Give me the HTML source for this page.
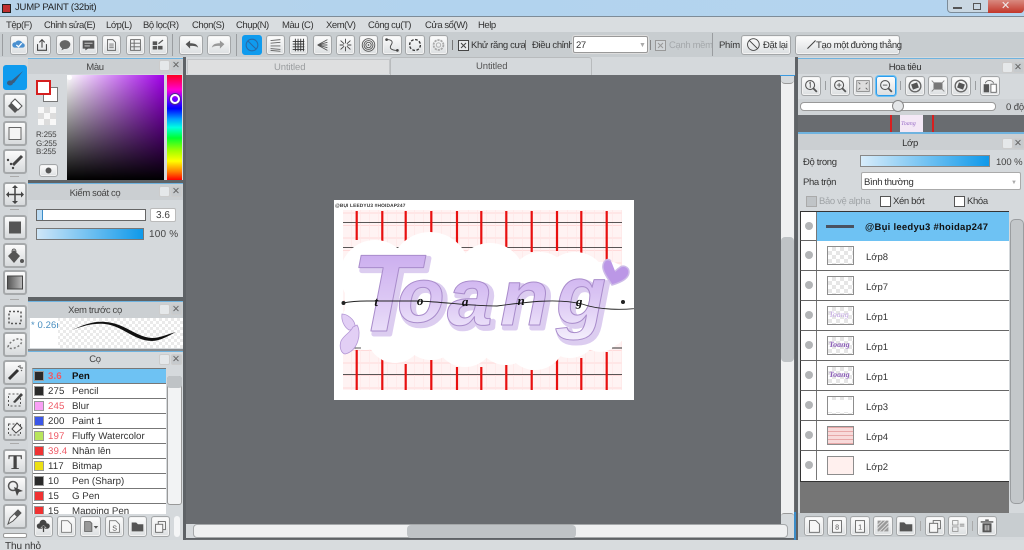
<!DOCTYPE html>
<html lang="vi"><head><meta charset="utf-8"><title>JUMP PAINT</title>
<style>
html,body{margin:0;padding:0}
body{width:1024px;height:550px;overflow:hidden;position:relative;background:#d8dcde;font:9.5px "Liberation Sans","DejaVu Sans",sans-serif;letter-spacing:-.35px;color:#333;text-rendering:geometricPrecision}
div,span,svg{position:absolute;box-sizing:border-box}
.t{white-space:nowrap;line-height:12px;margin-top:1px}
.m{top:19px;font-size:9.5px;letter-spacing:-.45px;color:#333;white-space:nowrap;line-height:14px}
.b{background:linear-gradient(#fdfdfd,#dcdfe1);border:1px solid #a3a6a8;border-radius:3px;box-shadow:inset 0 0 0 1px #f2f2f2}
.b svg{left:0;top:0;width:100%;height:100%}
.lb{left:3px;width:24px;height:25px;border:2px solid #a6a9ab;border-radius:3px;background:linear-gradient(#fbfbfb,#d7dadc)}
.lb svg{left:0;top:0;width:20px;height:21px}
.sep{width:1px;background:#9a9da0}
.ttl{color:#444;text-align:center;line-height:12px;white-space:nowrap;margin-top:2px}
.ic{width:11px;height:11px;background:#e5e8ea;border:1px solid #ccc;border-radius:2px}
.x{font-weight:bold;font-size:9.5px;color:#666;letter-spacing:0;line-height:12px;white-space:nowrap}
.r{left:32px;width:134px;height:15px;background:#fff;border-bottom:1px solid #777}
.sw{left:1px;top:2px;width:10px;height:10px;border:1px solid #999}
.n{left:15px;top:2px;font-size:9.7px;line-height:12px;color:#333;letter-spacing:.1px}
.p{color:#ee5a66}
.nm{left:39px;top:2px;font-size:9.7px;line-height:12px;color:#333;white-space:nowrap;letter-spacing:0}
.lr{left:800px;width:209px;height:30px;background:#fff;border-bottom:1px solid #666}
.eye{left:4px;top:10px;width:8px;height:8px;border-radius:50%;background:#b3b5b7}
.vl{left:15px;top:0;width:1px;height:29px;background:#777}
.th{left:26px;top:5px;width:27px;height:19px;border:1px solid #8d8d8d;background:repeating-conic-gradient(#e6e6e6 0 25%,#fff 0 50%) 0 0/8px 8px}
.ln{left:65px;top:11px;font-size:9.5px;line-height:12px;color:#333;white-space:nowrap;letter-spacing:0}
.cb{width:11px;height:11px;background:#fff;border:1px solid #555}
</style></head><body>

<!-- title bar -->
<div style="left:0;top:0;width:1024px;height:17px;background:linear-gradient(90deg,#b6d3ea,#b2d3ee 45%,#b5d4ef 100%);border-bottom:1px solid #7e8c98"></div>
<div style="left:2px;top:4px;width:9px;height:9px;background:#c03030;border:1px solid #222"></div>
<div class="t" style="left:15px;top:1px;font-size:9.5px;color:#222;letter-spacing:-.2px">JUMP PAINT (32bit)</div>
<div style="left:947px;top:0;width:77px;height:13px;background:#c9d7e2;border:1px solid #7c8b98;border-top:0;border-radius:0 0 4px 4px"></div>
<div style="left:953px;top:7px;width:9px;height:2px;background:#555"></div>
<div style="left:973px;top:3px;width:8px;height:7px;border:1.5px solid #555"></div>
<div style="left:988px;top:0;width:36px;height:13px;background:linear-gradient(#d98a80,#c2362a);border-radius:0 0 4px 0"></div>
<div class="t" style="left:1001px;top:-1px;font-size:11px;font-weight:bold;color:#f0eaea">✕</div>

<!-- menu -->
<div style="left:0;top:17px;width:1024px;height:15px;background:#d9dde0"></div>
<span class="m" style="left:6px">Tệp(F)</span>
<span class="m" style="left:44px">Chỉnh sửa(E)</span>
<span class="m" style="left:106px">Lớp(L)</span>
<span class="m" style="left:143px">Bộ lọc(R)</span>
<span class="m" style="left:192px">Chọn(S)</span>
<span class="m" style="left:236px">Chụp(N)</span>
<span class="m" style="left:282px">Màu (C)</span>
<span class="m" style="left:326px">Xem(V)</span>
<span class="m" style="left:368px">Công cụ(T)</span>
<span class="m" style="left:425px">Cửa sổ(W)</span>
<span class="m" style="left:478px">Help</span>

<!-- toolbar -->
<div style="left:0;top:32px;width:1024px;height:25px;background:#c8cdd0"></div>
<div class="sep" style="left:2px;top:34px;height:22px"></div>
<div class="b" style="left:10px;top:35px;width:18px;height:20px"><svg viewBox="0 0 18 20"><path d="M4 13a3 3 0 0 1 1-6 4.500 4.500 0 0 1 8 1 2.500 2.500 0 0 1 0 5z" fill="#4a90d0"/><path d="M6 10l2.500 2 3.500-4" stroke="#fff" stroke-width="1.400" fill="none"/></svg></div>
<div class="b" style="left:33px;top:35px;width:18px;height:20px"><svg viewBox="0 0 18 20"><path d="M4 9v7h10V9M9 13V4M6 7l3-3 3 3" fill="none" stroke="#444" stroke-width="1.200"/></svg></div>
<div class="b" style="left:56px;top:35px;width:18px;height:20px"><svg viewBox="0 0 18 20"><ellipse cx="9" cy="9.500" rx="6" ry="5" fill="#666"/><path d="M6 13l-1 3 4-2z" fill="#666"/></svg></div>
<div class="b" style="left:79px;top:35px;width:19px;height:20px"><svg viewBox="0 0 19 20"><path d="M3 5h13v9h-7l-3 2v-2H3z" fill="#555"/><path d="M5 8h9M5 11h6" stroke="#ddd"/></svg></div>
<div class="b" style="left:102px;top:35px;width:19px;height:20px"><svg viewBox="0 0 19 20"><path d="M5 4h6l3 3v9H5z" fill="none" stroke="#666"/><path d="M7 9h5M7 11h5M7 13h5" stroke="#777"/></svg></div>
<div class="b" style="left:126px;top:35px;width:19px;height:20px"><svg viewBox="0 0 19 20"><rect x="4" y="4" width="11" height="12" fill="none" stroke="#666"/><path d="M4 8h11M4 12h11M8 4v12" stroke="#666"/></svg></div>
<div class="b" style="left:149px;top:35px;width:19px;height:20px"><svg viewBox="0 0 19 20"><path d="M3 6h5v4H3zM9 11h5v4H9zM3 11h5v4H3z" fill="#555"/><path d="M9 8l5-4 1 1-5 4z" fill="#555"/></svg></div>
<div class="sep" style="left:172px;top:34px;height:22px"></div>
<div class="b" style="left:179px;top:35px;width:24px;height:20px"><svg viewBox="0 0 24 20"><path d="M6 9l5-4v3c5 0 8 1 9 5-2-2-5-2-9-2v3z" fill="#555"/></svg></div>
<div class="b" style="left:207px;top:35px;width:24px;height:20px"><svg viewBox="0 0 24 20"><path d="M18 9l-5-4v3c-5 0-8 1-9 5 2-2 5-2 9-2v3z" fill="#999"/></svg></div>
<div class="sep" style="left:236px;top:34px;height:22px"></div>
<div class="b" style="left:242px;top:35px;width:20px;height:20px;background:#0f9bee;border-color:#0f9bee;box-shadow:none"><svg viewBox="0 0 20 20"><circle cx="10" cy="10" r="6.500" fill="none" stroke="#286aa8" stroke-width="1.200"/><path d="M5.500 5.500l9 9" stroke="#286aa8" stroke-width="1.200"/></svg></div>
<div class="b" style="left:266px;top:35px;width:19px;height:20px"><svg viewBox="0 0 19 20"><path d="M4 5l11-1M4 8l11-1M4 11l11 0M4 14l11 1M4 16l11 1" stroke="#666" fill="none"/></svg></div>
<div class="b" style="left:289px;top:35px;width:19px;height:20px"><svg viewBox="0 0 19 20"><path d="M3 6h13M3 9h13M3 12h13M3 15h13M6 3v14M9 3v14M12 3v14M15 3v14" stroke="#333" fill="none"/></svg></div>
<div class="b" style="left:313px;top:35px;width:19px;height:20px"><svg viewBox="0 0 19 20"><path d="M4 10l11-6M4 10h11M4 10l11 6M4 10l11-3M4 10l11 3" stroke="#555" fill="none"/></svg></div>
<div class="b" style="left:336px;top:35px;width:19px;height:20px"><svg viewBox="0 0 19 20"><path d="M9.500 3v14M3 10h13M4 5l11 10M15 5L4 15" stroke="#444" fill="none"/><circle cx="9.500" cy="10" r="2" fill="#f2f2f2"/></svg></div>
<div class="b" style="left:359px;top:35px;width:19px;height:20px"><svg viewBox="0 0 19 20"><circle cx="9.500" cy="10" r="7" fill="none" stroke="#555"/><circle cx="9.500" cy="10" r="5" fill="none" stroke="#555"/><circle cx="9.500" cy="10" r="3" fill="none" stroke="#555"/><circle cx="9.500" cy="10" r="1" fill="#555"/></svg></div>
<div class="b" style="left:382px;top:35px;width:20px;height:20px"><svg viewBox="0 0 20 20"><path d="M4 4c7 0 7 3 5 6s-1 6 7 6" fill="none" stroke="#444"/><circle cx="4" cy="4" r="1.500" fill="#444"/><circle cx="16" cy="16" r="1.500" fill="#444"/></svg></div>
<div class="b" style="left:405px;top:35px;width:20px;height:20px"><svg viewBox="0 0 20 20"><circle cx="10" cy="10" r="6" fill="none" stroke="#333" stroke-width="1.500" stroke-dasharray="3 1.700"/></svg></div>
<div class="b" style="left:429px;top:35px;width:19px;height:20px"><svg viewBox="0 0 19 20"><circle cx="9.500" cy="10" r="5.500" fill="none" stroke="#aaa" stroke-width="2" stroke-dasharray="2.500 1"/><circle cx="9.500" cy="10" r="2.500" fill="none" stroke="#aaa"/></svg></div>
<div class="sep" style="left:452px;top:40px;height:10px;background:#777"></div>
<div class="cb" style="left:458px;top:40px;background:#e8eaec;border-color:#444"><svg viewBox="0 0 9 9" style="left:0;top:0;width:9px;height:9px"><path d="M2 2l5 5M7 2l-5 5" stroke="#444"/></svg></div>
<div class="t" style="left:471px;top:39px">Khử răng cưa</div>
<div class="sep" style="left:525px;top:40px;height:10px;background:#777"></div>
<div class="t" style="left:532px;top:39px">Điều chỉnh</div>
<div style="left:573px;top:36px;width:75px;height:17px;background:#fff;border:1px solid #999;border-radius:2px;box-shadow:0 0 0 1px #ddd"></div>
<div class="t" style="left:576px;top:39px">27</div>
<div class="t" style="left:639px;top:39px;font-size:7px;color:#aaa">▼</div>
<div class="sep" style="left:650px;top:40px;height:10px;background:#888"></div>
<div class="cb" style="left:655px;top:40px;background:#d2d6d9;border-color:#999"><svg viewBox="0 0 9 9" style="left:0;top:0;width:9px;height:9px"><path d="M2 2l5 5M7 2l-5 5" stroke="#999"/></svg></div>
<div class="t" style="left:669px;top:39px;color:#a4a8ab">Cạnh mềm</div>
<div class="sep" style="left:712px;top:33px;height:23px"></div>
<div class="t" style="left:719px;top:39px">Phím</div>
<div class="b" style="left:741px;top:35px;width:50px;height:20px"><svg viewBox="0 0 50 20"><circle cx="11" cy="9.500" r="6.500" fill="none" stroke="#444"/><path d="M6.500 5l9 9" stroke="#444"/></svg></div>
<div class="t" style="left:763px;top:39px">Đặt lại</div>
<div class="b" style="left:795px;top:35px;width:105px;height:20px"><svg viewBox="0 0 105 20"><path d="M8 14l9-9" stroke="#444" stroke-width="1.200"/></svg></div>
<div class="t" style="left:816px;top:39px">Tạo một đường thẳng</div>

<!-- left tool column -->
<div style="left:0;top:57px;width:28px;height:483px;background:#d2d6d9"></div>
<div class="lb" style="top:65px;background:#0f9bee;border-color:#0f9bee"><svg viewBox="0 0 20 21"><path d="M3 17l3-3 12-10-9 12z" fill="#3a5d80"/><ellipse cx="5" cy="16" rx="3" ry="2.500" fill="#3a5d80"/></svg></div>
<div class="lb" style="top:93px"><svg viewBox="0 0 20 21"><path d="M3 11l7-7 7 7-7 7z" fill="#555"/><path d="M6 8l4-4 7 7-4 4z" fill="#fff" stroke="#555"/></svg></div>
<div class="lb" style="top:121px"><svg viewBox="0 0 20 21"><rect x="4" y="4.500" width="12" height="12" fill="#f4f4f4" stroke="#666"/></svg></div>
<div class="lb" style="top:149px"><svg viewBox="0 0 20 21"><path d="M8 14l9-9" stroke="#444" stroke-width="3"/><circle cx="3" cy="9" r="1.200" fill="#444"/><circle cx="6" cy="13" r="1.200" fill="#444"/><circle cx="8" cy="17" r="1.200" fill="#444"/></svg></div>
<div style="left:10px;top:176px;width:9px;height:1px;background:#aaa"></div>
<div class="lb" style="top:182px"><svg viewBox="0 0 20 21"><path d="M10 3v15M2.500 10.500h15" stroke="#444" stroke-width="1.500"/><path d="M10 1l3 3H7zM10 20l3-3H7zM1 10.500l3-3v6zM19 10.500l-3-3v6z" fill="#444"/></svg></div>
<div style="left:10px;top:209px;width:9px;height:1px;background:#aaa"></div>
<div class="lb" style="top:215px"><svg viewBox="0 0 20 21"><rect x="4" y="4.500" width="12" height="12" fill="#555"/></svg></div>
<div class="lb" style="top:243px"><svg viewBox="0 0 20 21"><path d="M3 11l6-6 6 6-6 7z" fill="#555"/><path d="M7 7c0-4 4-4 4 0" fill="none" stroke="#555"/><circle cx="17" cy="16" r="2" fill="#555"/></svg></div>
<div class="lb" style="top:270px"><svg viewBox="0 0 20 21"><defs><linearGradient id="g1"><stop offset="0" stop-color="#555"/><stop offset="1" stop-color="#bbb"/></linearGradient></defs><rect x="2.500" y="4" width="15" height="13" fill="url(#g1)" stroke="#444"/></svg></div>
<div style="left:10px;top:299px;width:9px;height:1px;background:#aaa"></div>
<div class="lb" style="top:305px"><svg viewBox="0 0 20 21"><rect x="4" y="4.500" width="12" height="12" fill="none" stroke="#555" stroke-width="1.500" stroke-dasharray="2 2"/></svg></div>
<div class="lb" style="top:332px"><svg viewBox="0 0 20 21"><path d="M3 13c1-5 8-9 12-8s1 6-3 8-8 2-9 0z" fill="none" stroke="#777" stroke-width="1.500" stroke-dasharray="2 2"/></svg></div>
<div class="lb" style="top:360px"><svg viewBox="0 0 20 21"><path d="M4 17L13 8" stroke="#333" stroke-width="3"/><path d="M15 3v3M18 6h-3M13 4l1 1M17 9l-1-1" stroke="#555"/></svg></div>
<div class="lb" style="top:387px"><svg viewBox="0 0 20 21"><rect x="3.500" y="5" width="12" height="12" fill="none" stroke="#555" stroke-dasharray="2 2"/><path d="M8 13l8-9 2 2-8 8z" fill="#444"/></svg></div>
<div class="lb" style="top:416px"><svg viewBox="0 0 20 21"><rect x="3.500" y="6" width="12" height="11" fill="none" stroke="#555" stroke-dasharray="2 2"/><path d="M7 11l5-6 5 5-6 5z" fill="#f4f4f4" stroke="#444"/></svg></div>
<div style="left:10px;top:443px;width:9px;height:1px;background:#aaa"></div>
<div class="lb" style="top:449px"><svg viewBox="0 0 20 21"><text x="10" y="18" text-anchor="middle" font-family="Liberation Serif" font-weight="bold" font-size="21" fill="#444">T</text></svg></div>
<div class="lb" style="top:476px"><svg viewBox="0 0 20 21"><circle cx="8" cy="8" r="4.500" fill="none" stroke="#555" stroke-width="1.500"/><path d="M9 9l9 4-4 1-2 4z" fill="#444"/></svg></div>
<div class="lb" style="top:504px"><svg viewBox="0 0 20 21"><path d="M3 18l2-6 8-8 3 3-8 8z" fill="#f4f4f4" stroke="#555"/><path d="M9 8l4-4 3 3-4 4z" fill="#555"/></svg></div>
<div style="left:3px;top:533px;width:24px;height:5px;background:#fff;border:1px solid #999;border-radius:2px"></div>

<!-- left panels -->
<div style="left:28px;top:57px;width:155px;height:483px;background:#d5d9dc"></div>
<div style="left:28px;top:58px;width:155px;height:1px;background:#6fb3df"></div>
<div style="left:28px;top:59px;width:155px;height:15px;background:#cbcfd2"></div>
<div class="ttl" style="left:70px;top:60px;width:50px">Màu</div>
<div class="ic" style="left:159px;top:60px"></div><div class="ic" style="left:171px;top:60px;background:#c6cacd"></div>
<div class="x" style="left:172px;top:60px">✕</div>
<div style="left:43px;top:87px;width:15px;height:15px;background:#fff;border:1px solid #777"></div>
<div style="left:36px;top:80px;width:15px;height:15px;background:#fff;border:2px solid #d51f1f"></div>
<div style="left:38px;top:107px;width:18px;height:18px;background:repeating-conic-gradient(#dcdcdc 0 25%,#f8f8f8 0 50%) 0 0/12px 12px"></div>
<div class="t" style="left:36px;top:130px;font-size:8px;line-height:8.5px;letter-spacing:-.2px;color:#444">R:255<br>G:255<br>B:255</div>
<div class="b" style="left:39px;top:164px;width:19px;height:13px"><svg viewBox="0 0 19 13"><circle cx="9.500" cy="6.500" r="3.500" fill="#555"/></svg></div>
<div style="left:67px;top:75px;width:97px;height:105px;background:linear-gradient(transparent,#000),linear-gradient(90deg,#fff,#a000e8)"></div>
<div style="left:67px;top:75px;width:5px;height:5px;background:#fff;border-radius:50%"></div>
<div style="left:167px;top:75px;width:15px;height:105px;background:linear-gradient(#ff0020,#ff00d0 14%,#8000ff 22%,#0000ff 32%,#00a0ff 42%,#00ffe0 50%,#00ff30 60%,#a0ff00 72%,#ffff00 82%,#ff8000 92%,#ff0000)"></div>
<div style="left:170px;top:94px;width:10px;height:10px;border-radius:50%;border:2px solid #fff;box-shadow:0 0 0 1px #4b2a90;background:transparent"></div>

<!-- brush control -->
<div style="left:28px;top:180px;width:155px;height:3px;background:#5f6366"></div>
<div style="left:28px;top:183px;width:155px;height:1px;background:#6fb3df"></div>
<div style="left:28px;top:184px;width:155px;height:16px;background:#cbcfd2"></div>
<div class="ttl" style="left:65px;top:186px;width:60px">Kiểm soát cọ</div>
<div class="ic" style="left:159px;top:186px"></div><div class="ic" style="left:171px;top:186px;background:#c6cacd"></div>
<div class="x" style="left:172px;top:186px">✕</div>
<div style="left:36px;top:209px;width:110px;height:12px;background:linear-gradient(90deg,#bcdcf4 6px,#fff 6px);border:1px solid #666"></div>
<div style="left:42px;top:210px;width:1px;height:10px;background:#3b8cc8"></div>
<div style="left:150px;top:208px;width:26px;height:14px;background:#fff;border:1px solid #bbb;border-radius:2px;font-size:10px;letter-spacing:0;text-align:center;line-height:13px;color:#444">3.6</div>
<div style="left:36px;top:228px;width:108px;height:12px;background:linear-gradient(90deg,#cfe6f7,#0f99ea);border:1px solid #777"></div>
<div class="t" style="left:149px;top:228px;color:#444;font-size:10px;letter-spacing:.2px">100 %</div>

<!-- brush preview -->
<div style="left:28px;top:297px;width:155px;height:4px;background:#5f6366"></div>
<div style="left:28px;top:301px;width:155px;height:1px;background:#6fb3df"></div>
<div style="left:28px;top:302px;width:155px;height:16px;background:#cbcfd2"></div>
<div class="ttl" style="left:60px;top:303px;width:70px">Xem trước cọ</div>
<div class="ic" style="left:159px;top:304px"></div><div class="ic" style="left:171px;top:304px;background:#c6cacd"></div>
<div class="x" style="left:172px;top:304px">✕</div>
<div style="left:30px;top:318px;width:153px;height:30px;background:repeating-conic-gradient(#eaeaea 0 25%,#fff 0 50%) 0 0/6px 6px;overflow:hidden">
<svg width="153" height="30" style="left:0;top:0"><path d="M42 12C55 6 65 3 75 4C95 5 105 19 122 20C130 20 138 16 146 14C138 18 130 23 122 23C104 23 93 8 75 6C65 5 55 7 42 12z" fill="#111"/></svg>
<div style="left:0;top:0;width:28px;height:30px;background:#fff;overflow:hidden"><div class="t" style="left:1px;top:1px;color:#4a8fc0;letter-spacing:.1px">* 0.26m</div></div></div>

<!-- brush list -->
<div style="left:28px;top:349px;width:155px;height:2px;background:#888b8e"></div>
<div style="left:28px;top:351px;width:155px;height:1px;background:#6fb3df"></div>
<div class="ttl" style="left:70px;top:352px;width:50px">Cọ</div>
<div class="ic" style="left:159px;top:354px"></div><div class="ic" style="left:171px;top:354px;background:#c6cacd"></div>
<div class="x" style="left:172px;top:354px">✕</div>
<div style="left:32px;top:368px;width:134px;height:146px;overflow:hidden;background:#fff;border-left:1px solid #aaa;border-top:1px solid #777">
<div class="r" style="left:0;top:0;background:#6ec2f3"><div class="sw" style="background:#2a2a2a"></div><span class="n p" style="font-weight:bold">3.6</span><span class="nm" style="font-weight:bold;color:#111">Pen</span></div>
<div class="r" style="left:0;top:15px"><div class="sw" style="background:#2a2a2a"></div><span class="n">275</span><span class="nm">Pencil</span></div>
<div class="r" style="left:0;top:30px"><div class="sw" style="background:#f9a0f5"></div><span class="n p">245</span><span class="nm">Blur</span></div>
<div class="r" style="left:0;top:45px"><div class="sw" style="background:#3a56e8"></div><span class="n">200</span><span class="nm">Paint 1</span></div>
<div class="r" style="left:0;top:60px"><div class="sw" style="background:#b8e55c"></div><span class="n p">197</span><span class="nm">Fluffy Watercolor</span></div>
<div class="r" style="left:0;top:75px"><div class="sw" style="background:#f03232"></div><span class="n p">39.4</span><span class="nm">Nhân lên</span></div>
<div class="r" style="left:0;top:90px"><div class="sw" style="background:#ece014"></div><span class="n">117</span><span class="nm">Bitmap</span></div>
<div class="r" style="left:0;top:105px"><div class="sw" style="background:#2a2a2a"></div><span class="n">10</span><span class="nm">Pen (Sharp)</span></div>
<div class="r" style="left:0;top:120px"><div class="sw" style="background:#f03232"></div><span class="n">15</span><span class="nm">G Pen</span></div>
<div class="r" style="left:0;top:135px"><div class="sw" style="background:#f03232"></div><span class="n">15</span><span class="nm">Mapping Pen</span></div>
</div>
<div style="left:167px;top:376px;width:15px;height:129px;background:#f2f3f4;border:1px solid #999;border-radius:3px"></div>
<div style="left:167px;top:376px;width:15px;height:12px;background:#bfc3c6;border-radius:3px"></div>
<div class="b" style="left:34px;top:516px;width:19px;height:21px"><svg viewBox="0 0 19 21"><path d="M5 13a3 3 0 0 1 0-6 4 4 0 0 1 8 0 3 3 0 0 1 1 6z" fill="#444"/><path d="M9.500 9l3 3h-2v5h-2v-5h-2z" fill="#444" stroke="#eee" stroke-width=".500"/></svg></div>
<div class="b" style="left:57px;top:516px;width:19px;height:21px"><svg viewBox="0 0 19 21"><path d="M4 4h7l4 4v9H4z" fill="#f7f7f7" stroke="#777"/></svg></div>
<div class="b" style="left:80px;top:516px;width:21px;height:21px"><svg viewBox="0 0 21 21"><path d="M4 5h6l2 2v9H4z" fill="#999" stroke="#666"/><path d="M14 10h5l-2.500 3z" fill="#555"/></svg></div>
<div class="b" style="left:105px;top:516px;width:19px;height:21px"><svg viewBox="0 0 19 21"><path d="M4 4h7l4 4v9H4z" fill="#f7f7f7" stroke="#777"/><text x="9.500" y="15" text-anchor="middle" font-size="8" fill="#555">S</text></svg></div>
<div class="b" style="left:128px;top:516px;width:19px;height:21px"><svg viewBox="0 0 19 21"><path d="M3 6h5l2 2h6v8H3z" fill="#555"/></svg></div>
<div class="b" style="left:151px;top:516px;width:19px;height:21px"><svg viewBox="0 0 19 21"><rect x="7" y="5" width="8" height="9" fill="#f7f7f7" stroke="#666"/><rect x="4" y="8" width="8" height="9" fill="#f7f7f7" stroke="#666"/></svg></div>
<div style="left:174px;top:516px;width:6px;height:21px;background:#f4f5f6;border-radius:3px"></div>

<!-- document tabs -->
<div style="left:183px;top:57px;width:3px;height:483px;background:#5e6266"></div>
<div style="left:186px;top:57px;width:612px;height:18px;background:#d5d9dc"></div>
<div style="left:187px;top:59px;width:203px;height:15px;background:#dedfe0;border:1px solid #c4c6c8;border-bottom:0"></div>
<div class="t" style="left:274px;top:61px;color:#9a9d9f;font-size:9.5px;letter-spacing:-.1px">Untitled</div>
<div style="left:390px;top:57px;width:202px;height:18px;background:#d5d9dc;border:1px solid #b8bbbd;border-bottom:0;border-radius:3px 3px 0 0"></div>
<div class="t" style="left:476px;top:60px;color:#555;font-size:9.5px;letter-spacing:-.1px">Untitled</div>

<!-- canvas -->
<div style="left:186px;top:75px;width:612px;height:465px;background:#696c70"></div>
<div style="left:781px;top:75px;width:13px;height:452px;background:#eff0f1;border-radius:4px"></div>
<div style="left:781px;top:75px;width:13px;height:9px;background:#d5d9dc;border-bottom:1px solid #999;border-radius:0 0 4px 4px"></div>
<div style="left:780px;top:75px;width:15px;height:1px;background:#3a9ae0"></div>
<div style="left:781px;top:237px;width:13px;height:125px;background:#bfc3c6;border-radius:4px"></div>
<div style="left:781px;top:513px;width:13px;height:14px;background:#d5d9dc;border-top:1px solid #999;border-radius:3px"></div>
<div style="left:186px;top:524px;width:609px;height:15px;background:#d5d9dc;border-bottom:1px solid #5e6266"></div>
<div style="left:193px;top:524px;width:595px;height:14px;background:#eff0f1;border:1px solid #a5a8aa;border-radius:4px"></div>
<div style="left:407px;top:525px;width:169px;height:13px;background:#bfc3c6;border-radius:4px"></div>
<div style="left:795px;top:57px;width:3px;height:483px;background:#5e6266"></div>
<div style="left:794px;top:512px;width:2px;height:28px;background:#3a8cc8"></div>

<!-- artwork -->
<svg style="left:334px;top:200px" width="300" height="200" viewBox="334 200 300 200">
<defs>
<linearGradient id="lg" x1="0" y1="0" x2="0" y2="1"><stop offset="0" stop-color="#c4a2ec"/><stop offset=".55" stop-color="#dcc8f4"/><stop offset="1" stop-color="#f4effc"/></linearGradient>
<pattern id="gp" width="9" height="12.500" patternUnits="userSpaceOnUse"><rect width="9" height="12.500" fill="#fff3f3"/><path d="M0 .5h9" stroke="#ffd4d4" stroke-width=".8"/><path d="M.5 0v12.500" stroke="#ffe6e6" stroke-width=".6"/></pattern>
</defs>
<rect x="334" y="200" width="300" height="200" fill="#fff"/>
<text x="335" y="207" font-size="4.800" font-weight="bold" font-family="Liberation Sans" fill="#333" letter-spacing=".15">@BỤI LEEDYU3 #HOIDAP247</text>
<rect x="343" y="210" width="279" height="180" fill="url(#gp)"/>
<g stroke="#222" stroke-width=".8"><path d="M343 222.500h279M343 247.500h279M343 348h279M343 374.500h279"/></g>
<g stroke="#e80f0f" stroke-width="2.200">
<path d="M356.700 211v29M382.300 211v33M405.700 211v37M431.300 211v30M457 211v34M481.300 211v34M506.300 211v37M531.700 211v41M557 211v40M581.300 211v64M606.700 211v54"/>
<path d="M356.700 350v40M382.300 352v38M405.700 364v26M431.300 360v30M457 367v23M481.300 367v23M506.300 364v26M531.700 370v20M557 358v32M581.300 358v32M606.700 352v38"/>
</g>
<g fill="#fff">
<rect x="345" y="262" width="280" height="84" rx="14"/>
<circle cx="375" cy="275" r="35"/><circle cx="430" cy="272" r="40"/><circle cx="490" cy="278" r="35"/><circle cx="540" cy="282" r="30"/><circle cx="575" cy="285" r="33"/><circle cx="605" cy="300" r="20"/>
<circle cx="365" cy="325" r="25"/><circle cx="395" cy="335" r="28"/><circle cx="431" cy="330" r="30"/><circle cx="465" cy="337" r="30"/><circle cx="506" cy="335" r="30"/><circle cx="535" cy="340" r="30"/><circle cx="570" cy="330" r="28"/><circle cx="600" cy="330" r="22"/>
</g>
<path d="M345 348h16M612 348h10" stroke="#222" stroke-width=".8"/>
<g font-family="Liberation Sans" font-weight="bold" font-style="italic" stroke-linejoin="round">
<g fill="#dccdf0" stroke="#dccdf0" stroke-width="5" transform="translate(3 3)">
<text x="351" y="331" font-size="110">T</text><text x="397" y="322" font-size="78">o</text><text x="447" y="325" font-size="82">a</text><text x="500" y="325" font-size="80">n</text><text x="556" y="323" font-size="82">g</text></g>
<g fill="url(#lg)" stroke="#a98ccb" stroke-width="1">
<text x="351" y="331" font-size="110">T</text><text x="397" y="322" font-size="78">o</text><text x="447" y="325" font-size="82">a</text><text x="500" y="325" font-size="80">n</text><text x="556" y="323" font-size="82">g</text></g>
</g>
<path d="M343 303c10-2 18-2 24-2h50c30 1 50 5 80 5 30-4 60-8 85-2 14 5 40 8 70 2" fill="none" stroke="#222" stroke-width=".9"/>
<circle cx="343.500" cy="303" r="2" fill="#222"/><circle cx="623" cy="302" r="2" fill="#222"/>
<g font-family="Liberation Serif" font-style="italic" font-weight="bold" font-size="13" fill="#111" text-anchor="middle">
<text x="376" y="306">t</text><text x="420" y="305">o</text><text x="465" y="306">a</text><text x="521" y="305">n</text><text x="579" y="306">g</text></g>
<path d="M611 261c-3-3-7-1-8 4-1 5 3 11 9 20 7-2 17-6 17-13 0-5-6-8-10-4-2 1-3 3-4 3" fill="#bb97e6" stroke="#cdbbe8" stroke-width="1.500"/>
<path d="M342 314c5 0 12 5 13 11 0 4-3 5-6 5-5-3-8-10-7-16z" fill="#e2cff5" stroke="#b295d4" stroke-width=".8"/>
<path d="M357 325c5 8 1 26-12 29-4-1-6-7-4-13 3-6 9-8 12-14z" fill="#e2cff5" stroke="#b295d4" stroke-width=".8"/>
</svg>

<!-- right panels -->
<div style="left:798px;top:57px;width:226px;height:483px;background:#d5d9dc"></div>
<div style="left:798px;top:58px;width:226px;height:1px;background:#6fb3df"></div>
<div style="left:798px;top:59px;width:226px;height:15px;background:#cbcfd2"></div>
<div class="ttl" style="left:870px;top:60px;width:70px;color:#333">Hoa tiêu</div>
<div class="ic" style="left:1002px;top:62px"></div><div class="ic" style="left:1013px;top:62px;background:#c6cacd"></div>
<div class="x" style="left:1014px;top:62px">✕</div>
<div class="b" style="left:801px;top:76px;width:20px;height:20px"><svg viewBox="0 0 20 20"><circle cx="9" cy="9" r="5" fill="none" stroke="#555" stroke-width="1.200"/><path d="M12.500 12.500l4 4" stroke="#555" stroke-width="2"/><path d="M8 7l1.200-1v6" stroke="#555" fill="none"/></svg></div>
<div class="sep" style="left:825px;top:81px;height:9px"></div>
<div class="b" style="left:830px;top:76px;width:20px;height:20px"><svg viewBox="0 0 20 20"><circle cx="9" cy="9" r="5" fill="none" stroke="#555" stroke-width="1.200"/><path d="M12.500 12.500l4 4" stroke="#555" stroke-width="2"/><path d="M6.500 9h5M9 6.500v5" stroke="#555"/></svg></div>
<div class="b" style="left:853px;top:76px;width:20px;height:20px"><svg viewBox="0 0 20 20"><rect x="3" y="4" width="14" height="12" fill="#ddd" stroke="#888"/><path d="M5 6l2 2M15 6l-2 2M5 14l2-2M15 14l-2-2" stroke="#666"/></svg></div>
<div class="b" style="left:876px;top:76px;width:20px;height:20px;border-color:#2d9bea;box-shadow:0 0 0 1px #6ec2f3"><svg viewBox="0 0 20 20"><circle cx="9" cy="9" r="5" fill="none" stroke="#555" stroke-width="1.200"/><path d="M12.500 12.500l4 4" stroke="#555" stroke-width="2"/><path d="M6.500 9h5" stroke="#555"/></svg></div>
<div class="sep" style="left:900px;top:81px;height:9px"></div>
<div class="b" style="left:905px;top:76px;width:20px;height:20px"><svg viewBox="0 0 20 20"><circle cx="10" cy="10" r="6.500" fill="none" stroke="#666" stroke-width="1.500"/><rect x="6.500" y="7" width="7" height="6" fill="#555" transform="rotate(-20 10 10)"/></svg></div>
<div class="b" style="left:928px;top:76px;width:20px;height:20px"><svg viewBox="0 0 20 20"><rect x="5" y="6" width="10" height="8" fill="#777"/><path d="M3 4l3 3M17 4l-3 3M3 16l3-3M17 16l-3-3" stroke="#888"/></svg></div>
<div class="b" style="left:951px;top:76px;width:20px;height:20px"><svg viewBox="0 0 20 20"><circle cx="10" cy="10" r="6.500" fill="none" stroke="#666" stroke-width="1.500"/><rect x="6.500" y="7" width="7" height="6" fill="#555" transform="rotate(20 10 10)"/></svg></div>
<div class="sep" style="left:975px;top:81px;height:9px"></div>
<div class="b" style="left:980px;top:76px;width:20px;height:20px"><svg viewBox="0 0 20 20"><rect x="3" y="8" width="6" height="9" fill="#555"/><rect x="11" y="8" width="6" height="9" fill="#fff" stroke="#666"/><path d="M5 7c0-4 8-4 9 0" fill="none" stroke="#666"/></svg></div>
<div style="left:798px;top:99px;width:226px;height:16px;background:#cfd3d6"></div>
<div style="left:800px;top:102px;width:196px;height:9px;background:#fff;border:1px solid #999;border-radius:4px"></div>
<div style="left:892px;top:100px;width:12px;height:12px;background:#e4e6e8;border:1px solid #888;border-radius:50%"></div>
<div class="t" style="left:1006px;top:101px;color:#444;letter-spacing:-.1px">0 độ</div>
<div style="left:798px;top:115px;width:226px;height:17px;background:#696c70"></div>
<div style="left:890px;top:115px;width:2px;height:17px;background:#d81e1e"></div>
<div style="left:932px;top:115px;width:2px;height:17px;background:#d81e1e"></div>
<div style="left:900px;top:115px;width:23px;height:17px;background:#f4e8f6"></div>
<div class="t" style="left:901px;top:117px;font-size:6px;letter-spacing:0;font-family:'Liberation Serif';font-style:italic;color:#9a6fc8">Toang</div>
<div style="left:798px;top:132px;width:226px;height:2px;background:#6fb3df"></div>
<div style="left:798px;top:134px;width:226px;height:16px;background:#cbcfd2"></div>
<div class="ttl" style="left:885px;top:136px;width:50px;color:#333">Lớp</div>
<div class="ic" style="left:1002px;top:138px"></div><div class="ic" style="left:1013px;top:138px;background:#c6cacd"></div>
<div class="x" style="left:1014px;top:138px">✕</div>
<div class="t" style="left:803px;top:156px">Độ trong</div>
<div style="left:860px;top:155px;width:130px;height:12px;background:linear-gradient(90deg,#d8ecfa,#0f99ea);border:1px solid #888"></div>
<div class="t" style="left:996px;top:156px;color:#444;letter-spacing:-.1px">100 %</div>
<div class="t" style="left:803px;top:176px">Pha trộn</div>
<div style="left:861px;top:172px;width:160px;height:18px;background:#fff;border:1px solid #aaa;border-radius:2px"></div>
<div class="t" style="left:864px;top:176px">Bình thường</div>
<div class="t" style="left:1011px;top:176px;font-size:6px;color:#aaa">▼</div>
<div class="cb" style="left:806px;top:196px;background:#c0c4c7;border-color:#aaa"></div>
<div class="t" style="left:819px;top:195px;color:#9fa3a6">Bảo vệ alpha</div>
<div class="cb" style="left:880px;top:196px"></div>
<div class="t" style="left:893px;top:195px">Xén bớt</div>
<div class="cb" style="left:954px;top:196px"></div>
<div class="t" style="left:967px;top:195px">Khóa</div>

<!-- layers -->
<div style="left:800px;top:211px;width:209px;height:271px;background:#fff;border:1px solid #333"></div>
<div class="lr" style="top:211px;border-top:1px solid #333;border-left:1px solid #333"><div style="left:15px;top:0;width:193px;height:29px;background:#6ec2f3"></div><div class="eye"></div><div class="vl"></div><div style="left:25px;top:13px;width:28px;height:3px;background:#4a5260"></div><div class="ln" style="font-weight:bold;font-size:9.5px;color:#111;left:64px;top:10px;letter-spacing:.25px">@Bụi leedyu3 #hoidap247</div></div>
<div class="lr" style="top:241px;border-left:1px solid #333"><div class="eye"></div><div class="vl"></div><div class="th"></div><div class="ln">Lớp8</div></div>
<div class="lr" style="top:271px;border-left:1px solid #333"><div class="eye"></div><div class="vl"></div><div class="th"></div><div class="ln">Lớp7</div></div>
<div class="lr" style="top:301px;border-left:1px solid #333"><div class="eye"></div><div class="vl"></div><div class="th"><span class="t" style="left:1px;top:2px;font:italic 8px 'Liberation Serif';letter-spacing:0;color:#c4a8e6">Toang</span></div><div class="ln">Lớp1</div></div>
<div class="lr" style="top:331px;border-left:1px solid #333"><div class="eye"></div><div class="vl"></div><div class="th"><span class="t" style="left:1px;top:2px;font:italic bold 8px 'Liberation Serif';letter-spacing:0;color:#8a5cb8">Toang</span></div><div class="ln">Lớp1</div></div>
<div class="lr" style="top:361px;border-left:1px solid #333"><div class="eye"></div><div class="vl"></div><div class="th"><span class="t" style="left:1px;top:2px;font:italic bold 8px 'Liberation Serif';letter-spacing:0;color:#8a5cb8">Toang</span></div><div class="ln">Lớp1</div></div>
<div class="lr" style="top:391px;border-left:1px solid #333"><div class="eye"></div><div class="vl"></div><div class="th"><div style="left:0;top:3px;width:25px;height:12px;background:#fff"></div></div><div class="ln">Lớp3</div></div>
<div class="lr" style="top:421px;border-left:1px solid #333"><div class="eye"></div><div class="vl"></div><div class="th" style="background:repeating-linear-gradient(0deg,#e8a8a8 0 1px,#f8dada 1px 4px)"></div><div class="ln">Lớp4</div></div>
<div class="lr" style="top:451px;border-left:1px solid #333;border-bottom:1px solid #333;height:31px"><div class="eye"></div><div class="vl"></div><div class="th" style="background:#fff0ee"></div><div class="ln">Lớp2</div></div>
<div style="left:800px;top:482px;width:209px;height:31px;background:#767676"></div>
<div style="left:1010px;top:219px;width:14px;height:285px;background:#c3c7ca;border:1px solid #9a9da0;border-radius:5px"></div>
<div style="left:798px;top:513px;width:226px;height:24px;background:#c8cdd0"></div>
<div class="b" style="left:804px;top:516px;width:20px;height:20px"><svg viewBox="0 0 20 20"><path d="M5 4h7l4 4v9H5z" fill="#f7f7f7" stroke="#666"/></svg></div>
<div class="b" style="left:827px;top:516px;width:20px;height:20px"><svg viewBox="0 0 20 20"><rect x="5" y="4" width="10" height="13" fill="#f7f7f7" stroke="#666"/><text x="10" y="14" text-anchor="middle" font-size="8" fill="#555">8</text></svg></div>
<div class="b" style="left:850px;top:516px;width:20px;height:20px"><svg viewBox="0 0 20 20"><rect x="5" y="4" width="10" height="13" fill="#f7f7f7" stroke="#666"/><text x="10" y="14" text-anchor="middle" font-size="8" fill="#555">1</text></svg></div>
<div class="b" style="left:873px;top:516px;width:20px;height:20px"><svg viewBox="0 0 20 20"><rect x="4" y="4" width="12" height="12" fill="#999"/><path d="M4 9l5-5M4 13l9-9M6 16l10-10M10 16l6-6" stroke="#e0e0e0"/></svg></div>
<div class="b" style="left:896px;top:516px;width:20px;height:20px"><svg viewBox="0 0 20 20"><path d="M3 6h5l2 2h7v8H3z" fill="#555"/></svg></div>
<div class="sep" style="left:920px;top:521px;height:10px;background:#aaa"></div>
<div class="b" style="left:925px;top:516px;width:20px;height:20px"><svg viewBox="0 0 20 20"><rect x="8" y="4" width="8" height="9" fill="#f7f7f7" stroke="#666"/><rect x="4" y="7" width="9" height="10" fill="#f7f7f7" stroke="#666"/></svg></div>
<div class="b" style="left:948px;top:516px;width:20px;height:20px"><svg viewBox="0 0 20 20"><path d="M4 4h6v5H4zM4 11h6v5H4z" fill="none" stroke="#999"/><path d="M12 10h5M12 8h5" stroke="#888"/></svg></div>
<div class="sep" style="left:972px;top:521px;height:10px;background:#aaa"></div>
<div class="b" style="left:977px;top:516px;width:20px;height:20px"><svg viewBox="0 0 20 20"><path d="M5 7h10v10H5z" fill="#555"/><path d="M3 5.500h14M8 3.500h4" stroke="#555" stroke-width="1.500"/><path d="M8 9v6M10 9v6M12 9v6" stroke="#ddd"/></svg></div>

<!-- status bar -->
<div style="left:0;top:540px;width:1024px;height:10px;background:#d8dcde;overflow:hidden"><div class="t" style="left:5px;top:0;font-size:10px;letter-spacing:-.1px;color:#333">Thu nhỏ</div></div>

</body></html>
